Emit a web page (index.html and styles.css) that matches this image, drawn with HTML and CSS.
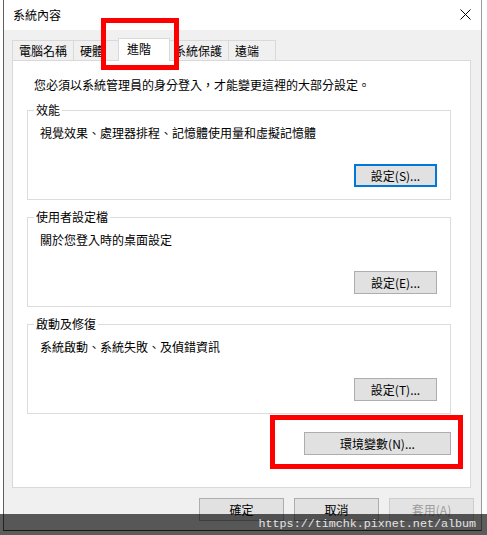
FILE: index.html
```html
<!DOCTYPE html>
<html lang="zh-Hant">
<head>
  <meta charset="UTF-8" />
  <meta name="viewport" content="width=device-width, initial-scale=1.0" />
  <title>系統內容</title>
  <link rel="stylesheet" href="styles.css">
</head>
<body>
  <div class="window">
    <div class="titlebar">
      <span class="title">系統內容</span>
      <svg class="close" width="11" height="11" viewBox="0 0 11 11">
        <path d="M0.5 0.5 L10.5 10.5 M10.5 0.5 L0.5 10.5" stroke="#000" stroke-width="1" fill="none" />
      </svg>
    </div>

    <div class="dialog">
      <div class="tabs">
        <div class="tab">電腦名稱</div>
        <div class="tab tab-short">硬體</div>
        <div class="tab tab-short active">進階</div>
        <div class="tab">系統保護</div>
        <div class="tab tab-short">遠端</div>
      </div>

      <div class="panel">
        <p class="intro">您必須以系統管理員的身分登入，才能變更這裡的大部分設定。</p>

        <fieldset class="group">
          <legend>效能</legend>
          <p class="group-text">視覺效果、處理器排程、記憶體使用量和虛擬記憶體</p>
          <div class="group-actions">
            <button class="btn btn-default">設定(S)...</button>
          </div>
        </fieldset>

        <fieldset class="group">
          <legend>使用者設定檔</legend>
          <p class="group-text">關於您登入時的桌面設定</p>
          <div class="group-actions">
            <button class="btn">設定(E)...</button>
          </div>
        </fieldset>

        <fieldset class="group">
          <legend>啟動及修復</legend>
          <p class="group-text">系統啟動、系統失敗、及偵錯資訊</p>
          <div class="group-actions">
            <button class="btn">設定(T)...</button>
          </div>
        </fieldset>

        <div class="panel-actions">
          <button class="btn btn-wide">環境變數(N)...</button>
        </div>
      </div>

      <div class="footer">
        <button class="btn btn-footer">確定</button>
        <button class="btn btn-footer">取消</button>
        <button class="btn btn-footer" disabled>套用(A)</button>
      </div>
    </div>
  </div>

  <!-- annotations drawn on top of the screenshot -->
  <div class="mark mark-tab"></div>
  <div class="mark mark-env"></div>
  <div class="watermark">https://timchk.pixnet.net/album</div>
</body>
</html>
```

FILE: styles.css
```css
* {
  box-sizing: border-box;
}
body {
  margin: 0;
  height: 535px;
  overflow: hidden;
  position: relative;
  background: #fff;
  font-family: "Noto Sans CJK TC", sans-serif;
  font-size: 12px;
  color: #000;
}
p {
  margin: 0;
}

.window {
  margin-left: 3px;
  width: 479px;
  border-left: 1px solid #5f5f5f;
  border-right: 1px solid #9a9a9a;
  border-bottom: 1px solid #444;
  background: #f0f0f0;
}

.titlebar {
  height: 30px;
  background: #fff;
  display: flex;
  align-items: center;
  justify-content: space-between;
  padding: 0 10px 0 9px;
}
.title {
  line-height: 30px;
}
.close {
  display: block;
  margin-top: -1px;
}

.dialog {
  padding: 8px 10px 9px 8px;
}

.tabs {
  display: flex;
  align-items: flex-end;
  height: 22px;
}
.tab {
  height: 20px;
  line-height: 19px;
  padding: 0 6px;
  margin-right: -1px;
  border: 1px solid #d9d9d9;
  border-bottom: 0;
  background: #f0f0f0;
  white-space: nowrap;
}
.tab-short {
  min-width: 48px;
}
.tab.active {
  position: relative;
  z-index: 1;
  height: 23px;
  line-height: 20px;
  min-width: 52px;
  padding: 0 8px;
  margin: 0 -3px -1px -2px;
  background: #fff;
}

.panel {
  background: #fff;
  border: 1px solid #d9d9d9;
  padding: 16px 19px 32px 14px;
}
.intro {
  line-height: 16px;
  margin-left: 7px;
}

.group {
  margin: 9px 0 0;
  padding: 7px 13px 12px 12px;
  border: 1px solid #dcdcdc;
  min-width: 0;
}
.group legend {
  margin-left: -6px;
  padding: 0 2px;
  line-height: 16px;
}
.group-text {
  line-height: 16px;
}
.group-actions {
  display: flex;
  justify-content: flex-end;
  margin-top: 23px;
}

.panel-actions {
  display: flex;
  justify-content: flex-end;
  margin-top: 18px;
}

.btn {
  font-family: inherit;
  font-size: 12px;
  color: #000;
  height: 23px;
  width: 83px;
  padding: 0;
  border: 1px solid #adadad;
  background: #e1e1e1;
  line-height: 20px;
}
.btn-default {
  border: 2px solid #0078d7;
}
.btn-wide {
  width: 147px;
}
.btn-footer {
  width: 85px;
}
.btn:disabled {
  color: #9d9d9d;
  background: #e3e3e3;
  border-color: #cdcdcd;
}

.footer {
  display: flex;
  justify-content: flex-end;
  gap: 10px;
  margin: 10px -3px 0 0;
}

.mark {
  position: absolute;
  border: 5px solid #ff0000;
}
.mark-tab {
  left: 101px;
  top: 18px;
  width: 78px;
  height: 52px;
}
.mark-env {
  left: 270px;
  top: 415px;
  width: 193px;
  height: 54px;
}

.watermark {
  position: absolute;
  left: 0;
  right: 0;
  top: 514px;
  height: 21px;
  background: rgba(0, 0, 0, 0.64);
  color: #e4e4e4;
  font-family: "Liberation Mono", monospace;
  font-size: 11.7px;
  line-height: 21px;
  text-align: right;
  padding-right: 11px;
}
```
